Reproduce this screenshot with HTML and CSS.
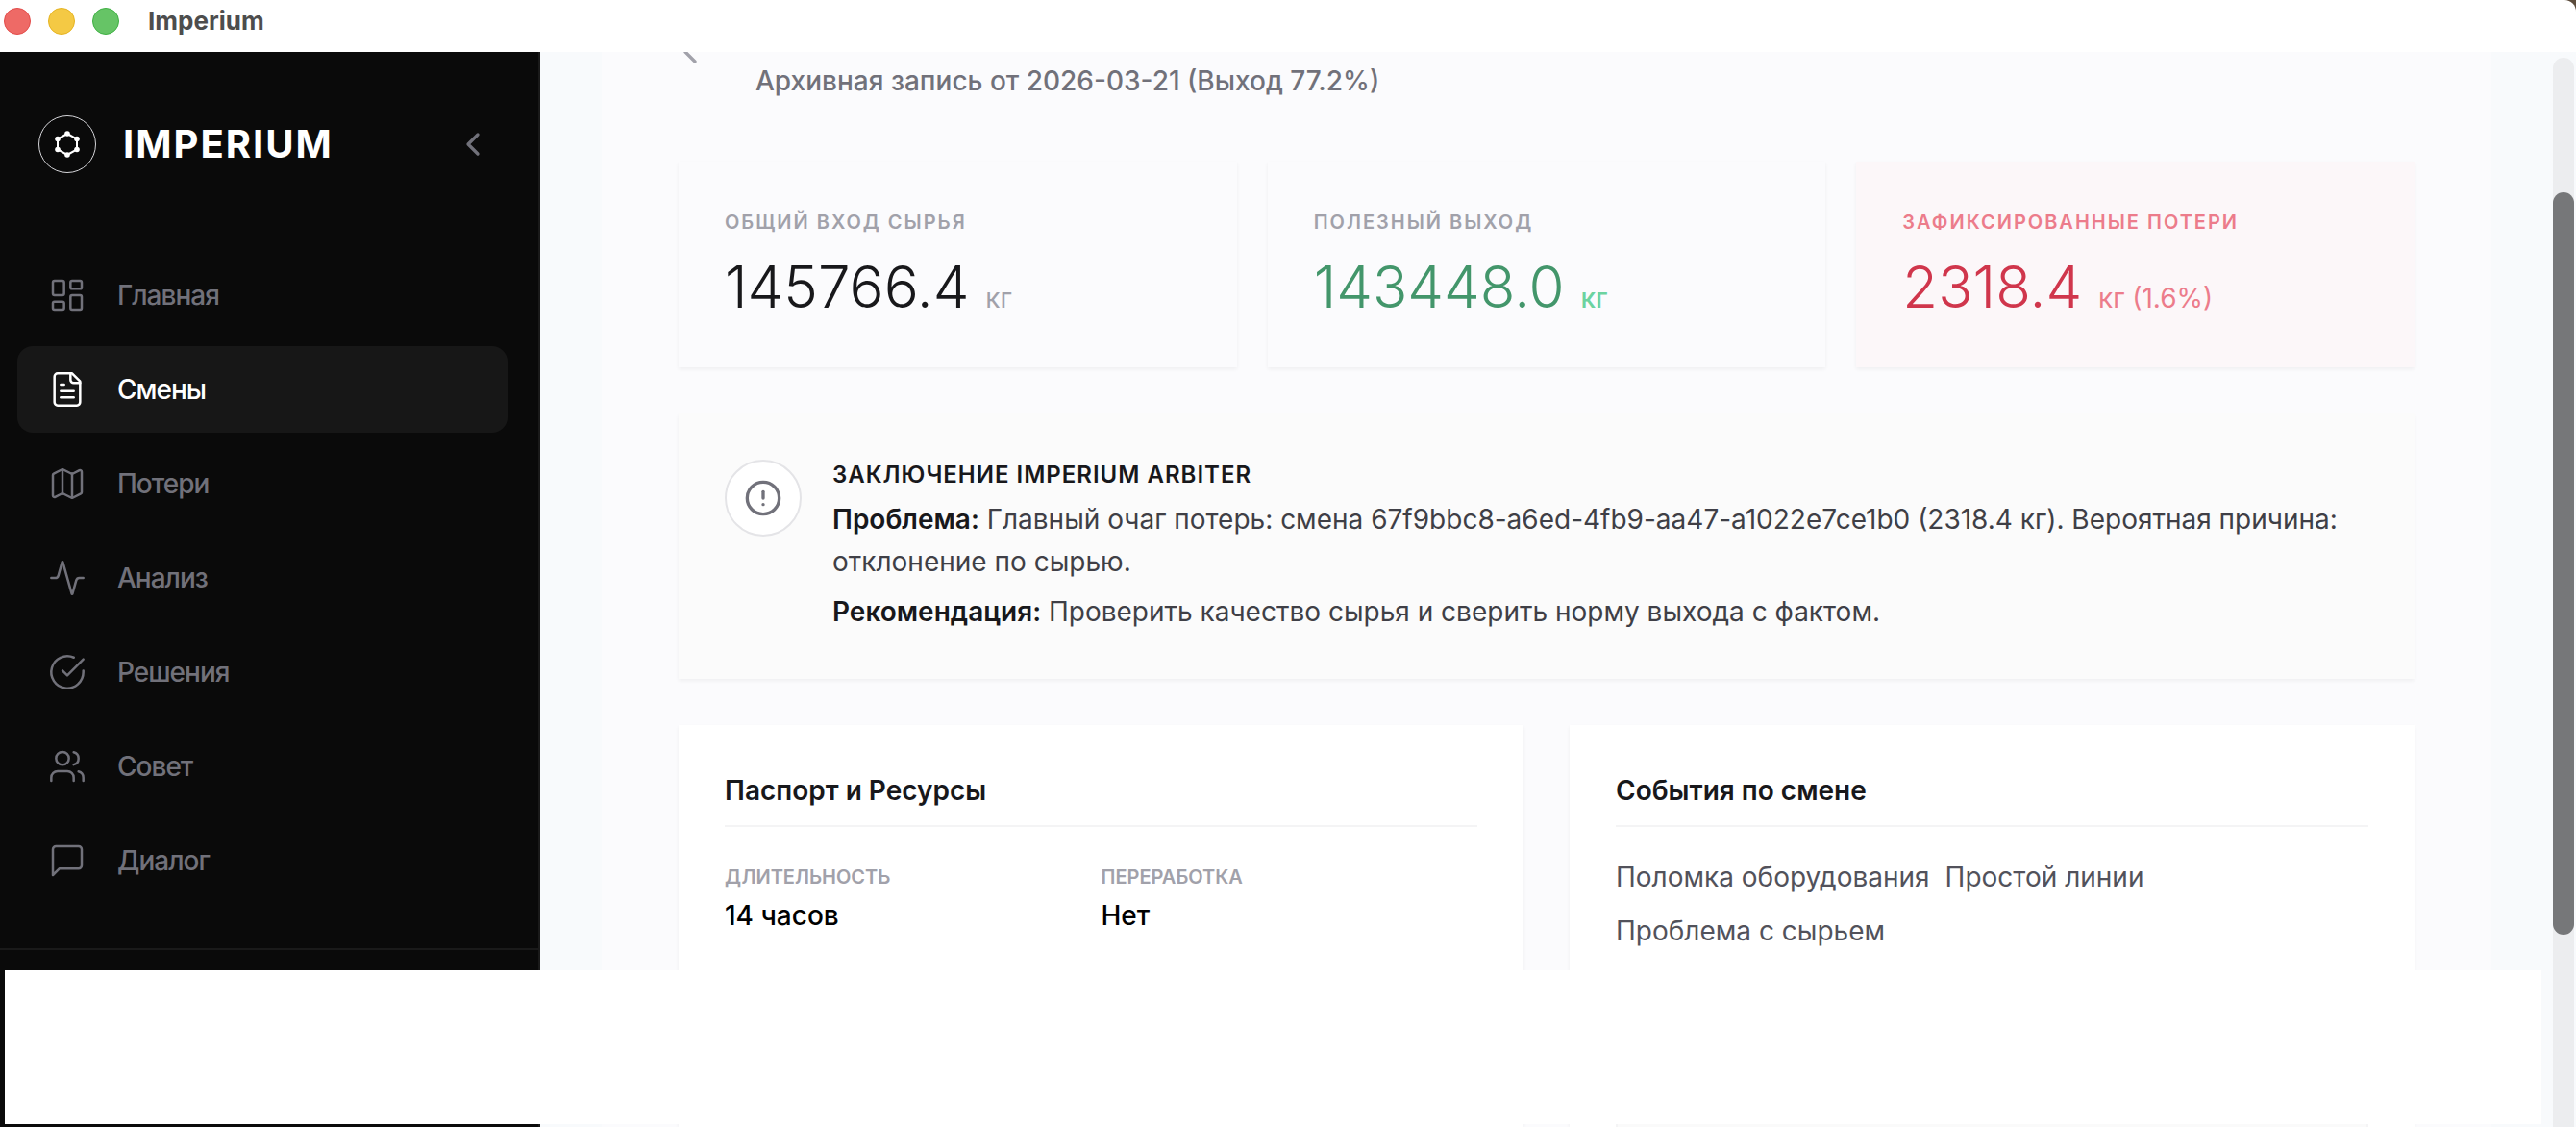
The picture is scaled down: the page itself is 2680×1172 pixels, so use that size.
FILE: index.html
```html
<!DOCTYPE html>
<html lang="ru">
<head>
    <meta charset="UTF-8">
    <meta name="viewport" content="width=device-width, initial-scale=1.0">
    <title>Imperium</title>
    <link rel="stylesheet" href="styles.css">
</head>
<body>
    <div class="window">
        <header class="titlebar">
            <button class="light light-close" aria-label="Закрыть"></button>
            <button class="light light-min" aria-label="Свернуть"></button>
            <button class="light light-max" aria-label="Развернуть"></button>
            <span class="window-title">Imperium</span>
        </header>

        <div class="app">
            <aside class="sidebar">
                <div class="brand">
                    <span class="brand-logo">
                        <svg width="32" height="32" viewBox="0 0 32 32" fill="none" stroke="currentColor" stroke-width="2">
                            <path d="M16 5 26 10.5V21.5L16 27 6 21.5V10.5Z"/>
                            <g fill="currentColor" stroke="none">
                                <circle cx="16" cy="5" r="2.8"/><circle cx="26" cy="10.5" r="2.8"/><circle cx="26" cy="21.5" r="2.8"/>
                                <circle cx="16" cy="27" r="2.8"/><circle cx="6" cy="21.5" r="2.8"/><circle cx="6" cy="10.5" r="2.8"/>
                            </g>
                        </svg>
                    </span>
                    <span class="brand-name">IMPERIUM</span>
                    <button class="collapse" aria-label="Свернуть меню">
                        <svg class="icon icon-bold" viewBox="0 0 24 24"><path d="m15 18-6-6 6-6"/></svg>
                    </button>
                </div>

                <nav class="nav">
                    <a href="#" class="nav-item">
                        <svg class="icon" viewBox="0 0 24 24"><rect width="7" height="9" x="3" y="3" rx="1"/><rect width="7" height="5" x="14" y="3" rx="1"/><rect width="7" height="9" x="14" y="12" rx="1"/><rect width="7" height="5" x="3" y="16" rx="1"/></svg>
                        Главная
                    </a>
                    <a href="#" class="nav-item active">
                        <svg class="icon" viewBox="0 0 24 24"><path d="M15 2H6a2 2 0 0 0-2 2v16a2 2 0 0 0 2 2h12a2 2 0 0 0 2-2V7Z"/><path d="M14 2v4a2 2 0 0 0 2 2h4"/><path d="M10 9H8"/><path d="M16 13H8"/><path d="M16 17H8"/></svg>
                        Смены
                    </a>
                    <a href="#" class="nav-item">
                        <svg class="icon" viewBox="0 0 24 24"><path d="M14.106 5.553a2 2 0 0 0 1.788 0l3.659-1.83A1 1 0 0 1 21 4.619v12.764a1 1 0 0 1-.553.894l-4.553 2.277a2 2 0 0 1-1.788 0l-4.212-2.106a2 2 0 0 0-1.788 0l-3.659 1.83A1 1 0 0 1 3 19.381V6.618a1 1 0 0 1 .553-.894l4.553-2.277a2 2 0 0 1 1.788 0z"/><path d="M15 5.764v15"/><path d="M9 3.236v15"/></svg>
                        Потери
                    </a>
                    <a href="#" class="nav-item">
                        <svg class="icon" viewBox="0 0 24 24"><path d="M22 12h-2.48a2 2 0 0 0-1.93 1.46l-2.35 8.36a.25.25 0 0 1-.48 0L9.24 2.18a.25.25 0 0 0-.48 0l-2.35 8.36A2 2 0 0 1 4.49 12H2"/></svg>
                        Анализ
                    </a>
                    <a href="#" class="nav-item">
                        <svg class="icon" viewBox="0 0 24 24"><path d="M22 11.08V12a10 10 0 1 1-5.93-9.14"/><path d="m9 11 3 3L22 4"/></svg>
                        Решения
                    </a>
                    <a href="#" class="nav-item">
                        <svg class="icon" viewBox="0 0 24 24"><path d="M16 21v-2a4 4 0 0 0-4-4H6a4 4 0 0 0-4 4v2"/><circle cx="9" cy="7" r="4"/><path d="M22 21v-2a4 4 0 0 0-3-3.87"/><path d="M16 3.13a4 4 0 0 1 0 7.75"/></svg>
                        Совет
                    </a>
                    <a href="#" class="nav-item">
                        <svg class="icon" viewBox="0 0 24 24"><path d="M21 15a2 2 0 0 1-2 2H7l-4 4V5a2 2 0 0 1 2-2h14a2 2 0 0 1 2 2z"/></svg>
                        Диалог
                    </a>
                </nav>
                <div class="sidebar-footer"></div>
            </aside>

            <main class="main">
                <div class="page">
                    <div class="page-head">
                        <button class="back" aria-label="Назад">
                            <svg class="icon icon-bold" viewBox="0 0 24 24"><path d="m15 18-6-6 6-6"/></svg>
                        </button>
                        <p class="subtitle">Архивная запись от 2026-03-21 (Выход 77.2%)</p>
                    </div>

                    <section class="stats">
                        <div class="card stat">
                            <h3>Общий вход сырья</h3>
                            <p class="value">145766.4 <span>кг</span></p>
                        </div>
                        <div class="card stat stat-good">
                            <h3>Полезный выход</h3>
                            <p class="value">143448.0 <span>кг</span></p>
                        </div>
                        <div class="card stat stat-loss">
                            <h3>Зафиксированные потери</h3>
                            <p class="value">2318.4 <span>кг (1.6%)</span></p>
                        </div>
                    </section>

                    <section class="card arbiter">
                        <span class="arbiter-icon">
                            <svg class="icon icon-bold" viewBox="0 0 24 24"><circle cx="12" cy="12" r="10"/><path d="M12 8v4"/><path d="M12 16h.01"/></svg>
                        </span>
                        <div class="arbiter-text">
                            <h3>Заключение Imperium Arbiter</h3>
                            <p><strong>Проблема:</strong> Главный очаг потерь: смена 67f9bbc8-a6ed-4fb9-aa47-a1022e7ce1b0 (2318.4 кг). Вероятная причина: отклонение по сырью.</p>
                            <p><strong>Рекомендация:</strong> Проверить качество сырья и сверить норму выхода с фактом.</p>
                        </div>
                    </section>

                    <section class="details">
                        <div class="card detail">
                            <h2>Паспорт и Ресурсы</h2>
                            <dl class="facts">
                                <div>
                                    <dt>Длительность</dt>
                                    <dd>14 часов</dd>
                                </div>
                                <div>
                                    <dt>Переработка</dt>
                                    <dd>Нет</dd>
                                </div>
                            </dl>
                        </div>
                        <div class="card detail">
                            <h2>События по смене</h2>
                            <ul class="events">
                                <li>Поломка оборудования</li>
                                <li>Простой линии</li>
                                <li>Проблема с сырьем</li>
                            </ul>
                            <div class="note"></div>
                        </div>
                    </section>
                </div>
            </main>

            <div class="scrollbar">
                <div class="track">
                    <div class="thumb"></div>
                </div>
            </div>
        </div>

        <div class="cover"></div>
    </div>
</body>
</html>
```

FILE: styles.css
```css
* {
    box-sizing: border-box;
}

body {
    margin: 0;
    background-color: #5c4c3c;
    color: #18181b;
    font-family: Inter, "Noto Sans", sans-serif;
    font-size: 28px;
    line-height: 40px;
}

h2, h3, p, dl, dd, ul {
    margin: 0;
    padding: 0;
}

button {
    border: none;
    padding: 0;
    background: none;
    color: inherit;
    cursor: pointer;
}

.window {
    position: relative;
    display: flex;
    flex-direction: column;
    height: 100vh;
    overflow: hidden;
    background-color: #fff;
    border-top-right-radius: 12px;
}

.icon {
    display: block;
    width: 40px;
    height: 40px;
    fill: none;
    stroke: currentColor;
    stroke-width: 1.5;
    stroke-linecap: round;
    stroke-linejoin: round;
    flex-shrink: 0;
}

.icon-bold {
    stroke-width: 2;
}

/* title bar */
.titlebar {
    display: flex;
    align-items: center;
    gap: 18px;
    height: 54px;
    padding: 0 4px 10px;
    flex-shrink: 0;
}

.light {
    width: 28px;
    height: 28px;
    border-radius: 50%;
    border: 1px solid;
}

.light-close {
    background-color: #ee6a66;
    border-color: #e34c4a;
}

.light-min {
    background-color: #f4c944;
    border-color: #e6b422;
}

.light-max {
    background-color: #66c466;
    border-color: #3fb144;
}

.window-title {
    margin-left: 12px;
    font-size: 26px;
    font-weight: 700;
    color: #4d4d4d;
}

.app {
    display: flex;
    flex: 1;
    min-height: 0;
}

/* sidebar */
.sidebar {
    display: flex;
    flex-direction: column;
    width: 562px;
    flex-shrink: 0;
    background-color: #0a0a0a;
    border-right: 2px solid #1a1a1a;
    color: #fff;
}

.brand {
    display: flex;
    align-items: center;
    padding: 66px 48px 82px 40px;
}

.brand-logo {
    display: flex;
    align-items: center;
    justify-content: center;
    width: 60px;
    height: 60px;
    border: 1px solid #d4d4d8;
    border-radius: 50%;
}

.brand-name {
    margin-left: 28px;
    font-size: 40px;
    font-weight: 700;
    letter-spacing: 2px;
}

.collapse {
    margin-left: auto;
    color: #71717a;
}

.nav {
    display: flex;
    flex-direction: column;
    gap: 8px;
    padding: 0 32px 0 18px;
}

.nav-item {
    display: flex;
    align-items: center;
    gap: 32px;
    height: 90px;
    padding: 0 32px;
    border-radius: 16px;
    color: #71717a;
    font-weight: 500;
    line-height: 42px;
    letter-spacing: -1px;
    text-decoration: none;
}

.nav-item.active {
    background-color: #171717;
    color: #fff;
}

.sidebar-footer {
    flex: 1;
    margin-top: 46px;
    border-top: 2px solid #1a1a1a;
}

/* content */
.main {
    flex: 1;
    min-width: 0;
    overflow: hidden;
    padding: 0 64px;
    background-color: #f8fafc;
}

.page {
    display: flex;
    flex-direction: column;
    gap: 48px;
    height: 100%;
    padding: 0 80px;
    background-color: #fbfbfd;
}

.page-head {
    display: flex;
    gap: 48px;
    height: 66px;
    padding-top: 10px;
}

/* the arrow is mostly scrolled out of view */
.back {
    align-self: flex-start;
    margin-top: -30px;
    margin-left: -8px;
    color: #a1a1aa;
}

.subtitle {
    color: #71717a;
    font-weight: 500;
}

.card {
    background-color: #fff;
    box-shadow: 0 2px 4px rgba(0, 0, 0, 0.05);
}

.stats {
    display: grid;
    grid-template-columns: repeat(3, 1fr);
    gap: 32px;
}

.stat {
    padding: 48px;
    height: 214px;
    background-color: #fbfbfd;
}

.stat h3 {
    color: #a1a1aa;
    font-size: 20px;
    line-height: 30px;
    font-weight: 600;
    letter-spacing: 2px;
    text-transform: uppercase;
}

.value {
    margin-top: 16px;
    font-size: 60px;
    line-height: 72px;
    font-weight: 300;
}

.value span {
    color: #a1a1aa;
    font-size: 28px;
    font-weight: 400;
}

.stat-good .value {
    color: #43966b;
}

.stat-good .value span {
    color: #6cd3a0;
    font-weight: 500;
}

.stat-loss {
    background-color: #fcf7f9;
}

.stat-loss h3,
.stat-loss .value span {
    color: #ec7c8b;
}

.stat-loss .value {
    color: #d0364c;
}

.arbiter {
    display: flex;
    align-items: flex-start;
    gap: 32px;
    padding: 48px;
    height: 276px;
    background-color: #fbfbfb;
}

.arbiter-icon {
    display: flex;
    align-items: center;
    justify-content: center;
    width: 80px;
    height: 80px;
    flex-shrink: 0;
    border: 2px solid #e4e4e7;
    border-radius: 50%;
    background-color: #fff;
    color: #71717a;
}

.arbiter-text {
    display: flex;
    flex-direction: column;
    gap: 8px;
    color: #3f3f46;
    line-height: 44px;
}

.arbiter-text h3 {
    color: #18181b;
    font-size: 24px;
    line-height: 32px;
    font-weight: 600;
    letter-spacing: 1px;
    text-transform: uppercase;
}

.arbiter-text strong {
    color: #18181b;
    font-weight: 600;
}

.details {
    display: grid;
    grid-template-columns: 1fr 1fr;
    gap: 48px;
    flex: 1;
}

.detail {
    display: flex;
    flex-direction: column;
    padding: 48px 48px 0;
}

.detail h2 {
    padding-bottom: 16px;
    margin-bottom: 32px;
    border-bottom: 2px solid #f4f4f5;
    font-size: 28px;
    font-weight: 600;
}

.facts {
    display: grid;
    grid-template-columns: 1fr 1fr;
}

.facts dt {
    color: #a1a1aa;
    font-size: 20px;
    line-height: 40px;
    font-weight: 600;
    text-transform: uppercase;
}

.facts dd {
    color: #000;
    font-weight: 500;
}

.events {
    display: flex;
    flex-wrap: wrap;
    gap: 16px;
    color: #52525b;
    list-style: none;
}

.note {
    flex: 1;
    margin-top: 48px;
    border: 2px solid #f4f4f5;
    border-bottom: none;
    background-color: #fafafa;
}

/* scrollbar */
.scrollbar {
    display: flex;
    width: 24px;
    padding: 6px 2px 0 0;
    background-color: #f8fafc;
}

.track {
    flex: 1;
    padding-top: 140px;
    border-radius: 11px 11px 0 0;
    background-color: #ecedef;
}

.thumb {
    height: 772px;
    border-radius: 11px;
    background-color: #767779;
}

/* blank panel over the lower part of the window */
.cover {
    position: absolute;
    left: 5px;
    right: 36px;
    bottom: 3px;
    height: 160px;
    background-color: #fff;
}
```
